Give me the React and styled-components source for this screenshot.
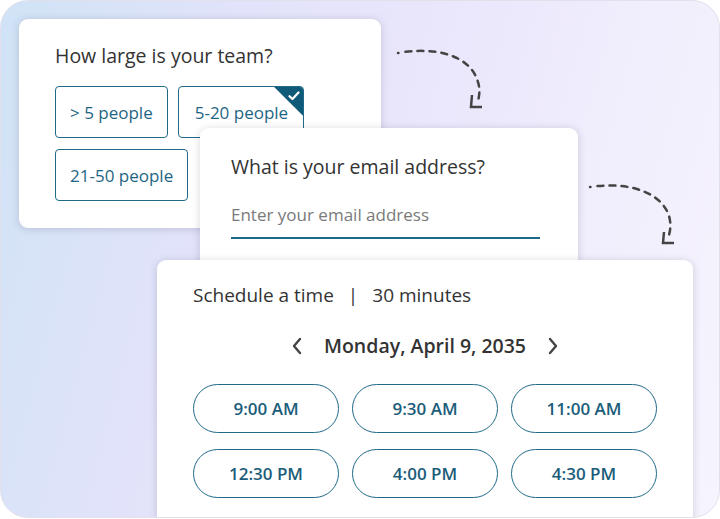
import React from 'react'
import styled, { createGlobalStyle } from 'styled-components'

const GlobalStyle = createGlobalStyle`
    html, body {
        margin: 0;
        padding: 0;
        background: #ffffff;
        font-family: "Open Sans", "Noto Sans", sans-serif;
        -webkit-font-smoothing: antialiased;
    }
`

const Frame = styled.div`
    position: relative;
    box-sizing: border-box;
    width: 720px;
    height: 518px;
    border: 1px solid #e2e0ea;
    border-radius: 28px;
    overflow: hidden;
    background: linear-gradient(105deg, #d0e3f6 0%, #e2e3fa 30%, #ebe7fc 55%, #f2effd 80%, #f6f4fd 100%);
`

const Card = styled.div`
    position: absolute;
    box-sizing: border-box;
    left: ${p => p.$x}px;
    top: ${p => p.$y}px;
    width: ${p => p.$w}px;
    height: ${p => p.$h}px;
    background: #ffffff;
    border-radius: 9px;
    box-shadow: 0 1px 8px rgba(40, 40, 60, 0.18);
    display: flex;
    flex-direction: column;
`

const Question = styled.h2`
    margin: 0;
    font-size: 19.5px;
    line-height: 26px;
    font-weight: 400;
    color: #333333;
`

const TeamCard = styled(Card)`
    padding: 24px 0 0 36px;
`

const ChoiceGrid = styled.div`
    margin-top: 17px;
    display: flex;
    flex-wrap: wrap;
    gap: 11px 10px;
    width: 260px;
`

const Choice = styled.div`
    position: relative;
    box-sizing: border-box;
    height: 52px;
    padding: 0 ${p => (p.$selected ? '15px' : '14px')} 0 ${p => (p.$selected ? '16px' : '14px')};
    display: flex;
    align-items: center;
    border: 1.5px solid #1f6a88;
    border-radius: 4px;
    font-size: 17px;
    color: #1e6584;
    overflow: hidden;
    white-space: nowrap;
`

const Corner = styled.span`
    position: absolute;
    top: 0;
    right: 0;
    width: 29px;
    height: 29px;
    background: #0f5a79;
    clip-path: polygon(0 0, 100% 0, 100% 100%);
    display: flex;
    justify-content: flex-end;
    padding: 4px 3px 0 0;
    box-sizing: border-box;
`

const EmailCard = styled(Card)`
    padding: 26px 38px 0 31px;
`

const EmailInput = styled.div`
    margin-top: 23px;
    padding-bottom: 10px;
    border-bottom: 2.5px solid #1c6a88;
    font-size: 17px;
    line-height: 24px;
    color: #7a7a7a;
`

const ScheduleCard = styled(Card)`
    padding: 22px 36px 0 36px;
`

const ScheduleHead = styled.div`
    display: flex;
    align-items: center;
    gap: 14px;
    font-size: 19px;
    line-height: 26px;
    color: #333333;
`

const Divider = styled.span`
    color: #333333;
`

const DateRow = styled.div`
    margin-top: 25px;
    display: flex;
    align-items: center;
    justify-content: center;
    gap: 21px;
    font-size: 19.5px;
    line-height: 26px;
    font-weight: 600;
    color: #333333;
`

const Chevron = styled.svg`
    width: 12px;
    height: 18px;
    display: block;
`

const TimeGrid = styled.div`
    margin-top: 25px;
    display: grid;
    grid-template-columns: repeat(3, 1fr);
    gap: 16px 13px;
`

const TimeSlot = styled.div`
    box-sizing: border-box;
    height: 49px;
    border: 1.5px solid #1f6a88;
    border-radius: 25px;
    display: flex;
    align-items: center;
    justify-content: center;
    font-size: 17px;
    font-weight: 600;
    color: #1b5d7a;
`

const Arrows = styled.svg`
    position: absolute;
    left: 0;
    top: 0;
    width: 720px;
    height: 518px;
    pointer-events: none;
`

const times = ['9:00 AM', '9:30 AM', '11:00 AM', '12:30 PM', '4:00 PM', '4:30 PM']

const App = () => {
    return (
        <Frame>
            <GlobalStyle />
            <TeamCard $x={18} $y={18} $w={362} $h={209}>
                <Question>How large is your team?</Question>
                <ChoiceGrid>
                    <Choice>&gt; 5 people</Choice>
                    <Choice $selected>
                        5-20 people
                        <Corner>
                            <svg width="12" height="10" viewBox="0 0 12 10">
                                <path d="M1.5 5.2 L4.5 8 L10.5 1.5" fill="none" stroke="#fff" strokeWidth="2.2" strokeLinecap="round" strokeLinejoin="round" />
                            </svg>
                        </Corner>
                    </Choice>
                    <Choice>21-50 people</Choice>
                </ChoiceGrid>
            </TeamCard>

            <Arrows viewBox="0 0 720 518">
                <g fill="none" stroke="#444" strokeWidth="2.5" strokeLinecap="round">
                    <path d="M397 52 C 430 46, 466 52, 476 78 C 479 86, 479 92, 477 100" strokeDasharray="0.5 7 6 6 6 6 6 6 6 6 6 6 6 6 6 6 6 6 6 6" />
                    <path d="M471 94 L470 106 L481 106" strokeLinejoin="miter" strokeLinecap="butt" />
                    <path d="M589 186 C 622 181, 656 188, 667 212 C 670 220, 670 227, 668 234" strokeDasharray="0.5 7 6 6 6 6 6 6 6 6 6 6 6 6 6 6 6 6 6 6" />
                    <path d="M663 231 L662 242 L673 242" strokeLinejoin="miter" strokeLinecap="butt" />
                </g>
            </Arrows>

            <EmailCard $x={199} $y={127} $w={378} $h={140}>
                <Question>What is your email address?</Question>
                <EmailInput>Enter your email address</EmailInput>
            </EmailCard>

            <ScheduleCard $x={156} $y={259} $w={536} $h={290}>
                <ScheduleHead>
                    <span>Schedule a time</span>
                    <Divider>|</Divider>
                    <span>30 minutes</span>
                </ScheduleHead>
                <DateRow>
                    <Chevron viewBox="0 0 12 18">
                        <path d="M9 2 L3 9 L9 16" fill="none" stroke="#444" strokeWidth="2.4" strokeLinecap="round" strokeLinejoin="round" />
                    </Chevron>
                    <span>Monday, April 9, 2035</span>
                    <Chevron viewBox="0 0 12 18">
                        <path d="M3 2 L9 9 L3 16" fill="none" stroke="#444" strokeWidth="2.4" strokeLinecap="round" strokeLinejoin="round" />
                    </Chevron>
                </DateRow>
                <TimeGrid>
                    {times.map(t => (
                        <TimeSlot key={t}>{t}</TimeSlot>
                    ))}
                </TimeGrid>
            </ScheduleCard>
        </Frame>
    )
}

export default App
